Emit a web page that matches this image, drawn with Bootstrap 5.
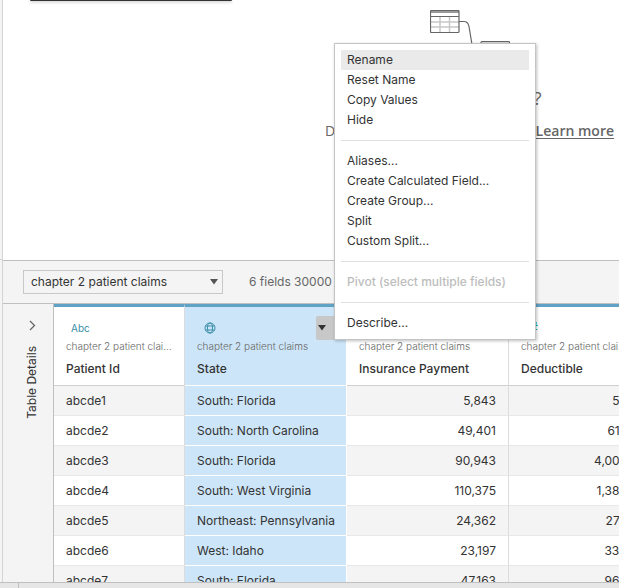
<!DOCTYPE html>
<html lang="en">
<head>
<meta charset="utf-8">
<meta name="viewport" content="width=device-width, initial-scale=1">
<title>Data Source</title>
<link href="https://cdn.jsdelivr.net/npm/bootstrap@5.3.0/dist/css/bootstrap.min.css" rel="stylesheet">
<style>
  body { font-family: Inter, "Noto Sans", sans-serif; font-size: 12px; line-height: 20px; color: #333; background: #fff; }
  .gutter { width: 3px; background: #f4f4f4; border-right: 1px solid #d4d4d4; }
  .gutter-top { height: 260px; border-bottom: 1px solid #d4d4d4; }
  .canvas { height: 260px; padding: 10px 5px 0 0; color: #666; font-family: "Open Sans", sans-serif; }
  .hint-title { font-size: 18px; line-height: 24px; margin: 22px 0 11px; font-weight: 500; }
  .hint-text { font-size: 14px; line-height: 20px; width: 289px; white-space: nowrap; }
  .hint-text a { color: #666; font-weight: 600; text-underline-offset: 2px; }
  .toast-edge { top: 0; left: 30px; width: 202px; height: 1px; background: #333; border-radius: 0 0 2px 2px; box-shadow: 0 1px 3px rgba(0,0,0,.4); }
  .toolbar { height: 44px; background: #f4f4f4; border: solid #bfbfbf; border-width: 1px 0; padding-left: 20px; gap: 26px; color: #666; }
  .source { position: relative; width: 200px; }
  .source select { appearance: none; width: 100%; height: 24px; padding: 0 24px 0 7px; border: 1px solid #c8c8c8; border-radius: 0; background: #f4f4f4; color: #333; font-size: 12px; }
  .source svg { position: absolute; right: 5px; top: 9px; pointer-events: none; }
  .side { width: 51px; background: #f4f4f4; border-right: 1px solid #bfbfbf; padding: 12px 0 0 19px; }
  .side button { background: none; border: 0; padding: 0; color: #333; line-height: 20px; gap: 12px; }
  .vertical-text { writing-mode: vertical-rl; transform: rotate(180deg); }
  .grid { table-layout: fixed; width: 586px; border-collapse: separate; border-spacing: 0; }
  .grid th { position: relative; height: 82px; padding: 12px 12px 0; vertical-align: top; border-top: 3px solid #5fa2c6; border-right: 1px solid #dcdcdc; border-bottom: 1px solid #d0d0d0; font-weight: 500; }
  .grid td { height: 30px; padding: 0 12px; border-right: 1px solid #dcdcdc; border-bottom: 1px solid #e8e8e8; white-space: nowrap; line-height: 29px; }
  .grid tbody tr:nth-child(odd) td { background: #f4f4f4; }
  .grid .picked, .grid tbody tr:nth-child(odd) .picked { background: #cde5f8; border-right-color: #fff; border-bottom-color: #fff; }
  .grid td.num { text-align: right; }
  .kind { height: 18px; padding-left: 5px; font-size: 10px; line-height: 18px; font-weight: 400; color: #3b8ea8; }
  .kind svg { display: block; margin: 0 2px; }
  .kind.measure { color: #00a67a; padding-left: 8px; font-size: 14px; }
  .from { font-size: 10px; line-height: 18px; font-weight: 300; color: #666; }
  .field { line-height: 20px; padding-top: 4px; }
  .field-more { position: absolute; right: 0; top: 9px; width: 30px; height: 24px; padding: 0 0 0 2px; border: 0; border-radius: 2px; background: #c8c8c8; text-align: left; line-height: 0; }
  .statusbar { height: 6px; background: #e6e6e6; border-top: 1px solid #c0c0c0; }
  .statusbar span { width: 19px; border-right: 1px solid #c0c0c0; }
  .dropdown-menu.field-menu { left: 334px; top: 43px; width: 202px; padding: 6px; border: 1px solid #c4c4c4; border-radius: 0; box-shadow: 1px 1px 3px rgba(0,0,0,.25); font-size: 12px; color: #333; }
  .field-menu .dropdown-item { padding: 0 6px; line-height: 20px; color: #333; }
  .field-menu .dropdown-item.current { background: #eaeaea; }
  .field-menu .dropdown-item:disabled { color: #bdbdbd; font-weight: 500; }
  .field-menu .dropdown-divider { margin: 10px 0; border-color: #dfdfdf; opacity: 1; }
</style>
<script src="https://cdn.jsdelivr.net/npm/bootstrap@5.3.0/dist/js/bootstrap.bundle.min.js"></script>
</head>
<body class="vh-100 overflow-hidden d-flex flex-column position-relative">
<div class="toast-edge position-absolute"></div>
<div class="d-flex flex-grow-1 overflow-hidden">
  <div class="gutter flex-shrink-0"><div class="gutter-top"></div></div>
  <main class="d-flex flex-column flex-grow-1 overflow-hidden">
    <section class="canvas d-flex flex-column align-items-end flex-shrink-0">
      <div class="d-flex flex-column align-items-center">
        <svg width="80" height="54" viewBox="430 10 80 54" fill="none" aria-hidden="true">
          <path d="M440 16v17M449.500 16v17M431 22h28M431 27h28" stroke="#c8c8c8" stroke-width="1.500"/>
          <path d="M431 12h28" stroke="#999" stroke-width="2"/>
          <rect x="430.500" y="10.500" width="28.500" height="22" rx="1" stroke="#666" stroke-width="1.200"/>
          <path d="M431 16.500h28M459 21.500h5q4 0 5 5l3 18q2 10 9 10" stroke="#666" stroke-width="1.200"/>
          <rect x="481" y="41.500" width="28.500" height="22" rx="1" stroke="#666" stroke-width="1.200"/>
          <path d="M482 43.500h27" stroke="#aaa" stroke-width="2"/>
        </svg>
        <h2 class="hint-title">Need more data?</h2>
        <p class="hint-text d-flex justify-content-between mb-0"><span>Drag tables here to relate them.</span><a href="#">Learn more</a></p>
      </div>
    </section>
    <div class="toolbar d-flex align-items-center flex-shrink-0">
      <div class="source">
        <select aria-label="Table"><option>chapter 2 patient claims</option></select>
        <svg width="8" height="6" aria-hidden="true"><path d="M0 0h8l-4 5.500z" fill="#555"/></svg>
      </div>
      <span class="text-nowrap">6 fields 30000 rows</span>
    </div>
    <div class="d-flex flex-grow-1 overflow-hidden">
      <aside class="side flex-shrink-0">
        <button type="button" class="d-flex flex-column align-items-center">
          <svg width="8" height="18" fill="none" stroke="#666" stroke-width="1.300" aria-hidden="true"><path d="M2 5l4.500 4.500L2 14"/></svg>
          <span class="vertical-text">Table Details</span>
        </button>
      </aside>
      <div class="overflow-hidden flex-grow-1">
        <table class="grid">
          <colgroup><col style="width:131px"><col style="width:162px"><col style="width:162px"><col style="width:131px"></colgroup>
          <thead>
            <tr>
              <th scope="col"><div class="kind">Abc</div><div class="from text-truncate">chapter 2 patient claims</div><div class="field">Patient Id</div></th>
              <th scope="col" class="picked">
                <div class="kind"><svg width="12" height="18" viewBox="0 0 12 18" fill="none" stroke="#3b8ea8" aria-hidden="true"><circle cx="6" cy="9" r="5"/><ellipse cx="6" cy="9" rx="2.500" ry="5"/><path d="M1.500 7h9M1.500 11h9"/></svg></div>
                <div class="from">chapter 2 patient claims</div><div class="field">State</div>
                <button class="field-more" type="button" aria-label="State field menu"><svg width="8" height="6" aria-hidden="true"><path d="M0 0h8l-4 5.500z" fill="#333"/></svg></button>
              </th>
              <th scope="col"><div class="kind measure">#</div><div class="from">chapter 2 patient claims</div><div class="field">Insurance Payment</div></th>
              <th scope="col"><div class="kind measure">#</div><div class="from text-truncate">chapter 2 patient claims</div><div class="field">Deductible</div></th>
            </tr>
          </thead>
          <tbody>
            <tr><td>abcde1</td><td class="picked">South: Florida</td><td class="num">5,843</td><td class="num">58</td></tr>
            <tr><td>abcde2</td><td class="picked">South: North Carolina</td><td class="num">49,401</td><td class="num">615</td></tr>
            <tr><td>abcde3</td><td class="picked">South: Florida</td><td class="num">90,943</td><td class="num">4,002</td></tr>
            <tr><td>abcde4</td><td class="picked">South: West Virginia</td><td class="num">110,375</td><td class="num">1,380</td></tr>
            <tr><td>abcde5</td><td class="picked">Northeast: Pennsylvania</td><td class="num">24,362</td><td class="num">272</td></tr>
            <tr><td>abcde6</td><td class="picked">West: Idaho</td><td class="num">23,197</td><td class="num">334</td></tr>
            <tr><td>abcde7</td><td class="picked">South: Florida</td><td class="num">47,163</td><td class="num">960</td></tr>
          </tbody>
        </table>
      </div>
    </div>
  </main>
</div>
<footer class="statusbar d-flex flex-shrink-0"><span></span></footer>
<div class="dropdown-menu field-menu show">
  <button class="dropdown-item current" type="button">Rename</button>
  <button class="dropdown-item" type="button">Reset Name</button>
  <button class="dropdown-item" type="button">Copy Values</button>
  <button class="dropdown-item" type="button">Hide</button>
  <hr class="dropdown-divider">
  <button class="dropdown-item" type="button">Aliases...</button>
  <button class="dropdown-item" type="button">Create Calculated Field...</button>
  <button class="dropdown-item" type="button">Create Group...</button>
  <button class="dropdown-item" type="button">Split</button>
  <button class="dropdown-item" type="button">Custom Split...</button>
  <hr class="dropdown-divider">
  <button class="dropdown-item" type="button" disabled>Pivot (select multiple fields)</button>
  <hr class="dropdown-divider">
  <button class="dropdown-item" type="button">Describe...</button>
</div>
</body>
</html>
